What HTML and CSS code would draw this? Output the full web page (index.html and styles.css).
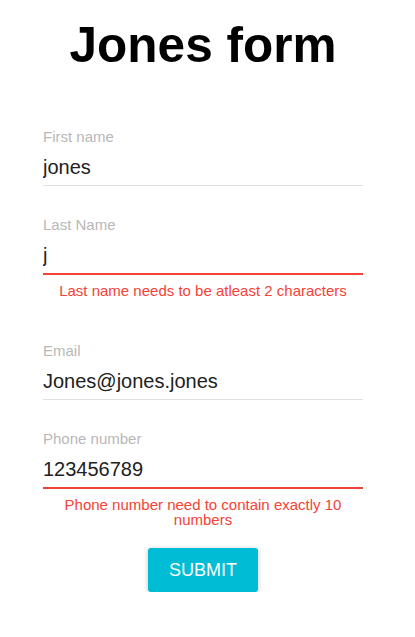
FILE: index.html
```html
<!DOCTYPE html>
<html>
<head>
<meta charset="utf-8">
<link rel="stylesheet" href="styles.css">
</head>
<body>
<div class="page">
  <h1 class="title">Jones form</h1>
  <form class="form">
    <div class="field">
      <label class="label" for="first">First name</label>
      <input class="input" id="first" type="text" value="jones">
    </div>
    <div class="field">
      <label class="label" for="last">Last Name</label>
      <input class="input input-error" id="last" type="text" value="j">
      <div class="error">Last name needs to be atleast 2 characters</div>
    </div>
    <div class="field">
      <label class="label" for="email">Email</label>
      <input class="input" id="email" type="text" value="Jones@jones.jones">
    </div>
    <div class="field">
      <label class="label" for="phone">Phone number</label>
      <input class="input input-error" id="phone" type="text" value="123456789">
      <div class="error">Phone number need to contain exactly 10 numbers</div>
    </div>
    <div class="actions">
      <button class="submit" type="button">SUBMIT</button>
    </div>
  </form>
</div>
</body>
</html>
```

FILE: styles.css
```css
html, body {
  margin: 0;
  padding: 0;
  background: #ffffff;
}

body {
  font-family: "Liberation Sans", Arial, sans-serif;
}

.page {
  width: 406px;
}

.title {
  margin: 0;
  padding-top: 17px;
  font-size: 49.5px;
  line-height: 56px;
  font-weight: bold;
  text-align: center;
  color: #000000;
}

.form {
  width: 320px;
  margin: 55px auto 0;
  display: flex;
  flex-direction: column;
}

.field {
  display: flex;
  flex-direction: column;
}

.field + .field {
  margin-top: 30px;
}

.field:has(.error) {
  margin-bottom: 14px;
}

.label {
  display: block;
  font-size: 15px;
  line-height: 18px;
  color: #b8b8b8;
}

.input {
  display: block;
  box-sizing: content-box;
  width: 100%;
  margin: 0;
  padding: 9px 0 6px;
  height: 24px;
  line-height: 24px;
  font-family: "Liberation Sans", Arial, sans-serif;
  font-size: 20px;
  color: #212121;
  background: transparent;
  border: none;
  border-bottom: 1px solid #e0e0e0;
  outline: none;
}

.input-error {
  border-bottom: 2px solid #f44336;
}

.error {
  margin-top: 8px;
  font-size: 15px;
  line-height: 15px;
  color: #f44336;
  text-align: center;
}

.actions {
  display: flex;
  justify-content: center;
  margin-top: 7px;
}

.submit {
  height: 44px;
  padding: 0 21px;
  border: none;
  border-radius: 3px;
  background: #00bcd4;
  color: #ffffff;
  font-family: "Liberation Sans", Arial, sans-serif;
  font-size: 18px;
  box-shadow: 0 1px 6px rgba(0, 0, 0, 0.12), 0 1px 4px rgba(0, 0, 0, 0.12);
  cursor: pointer;
}
```
